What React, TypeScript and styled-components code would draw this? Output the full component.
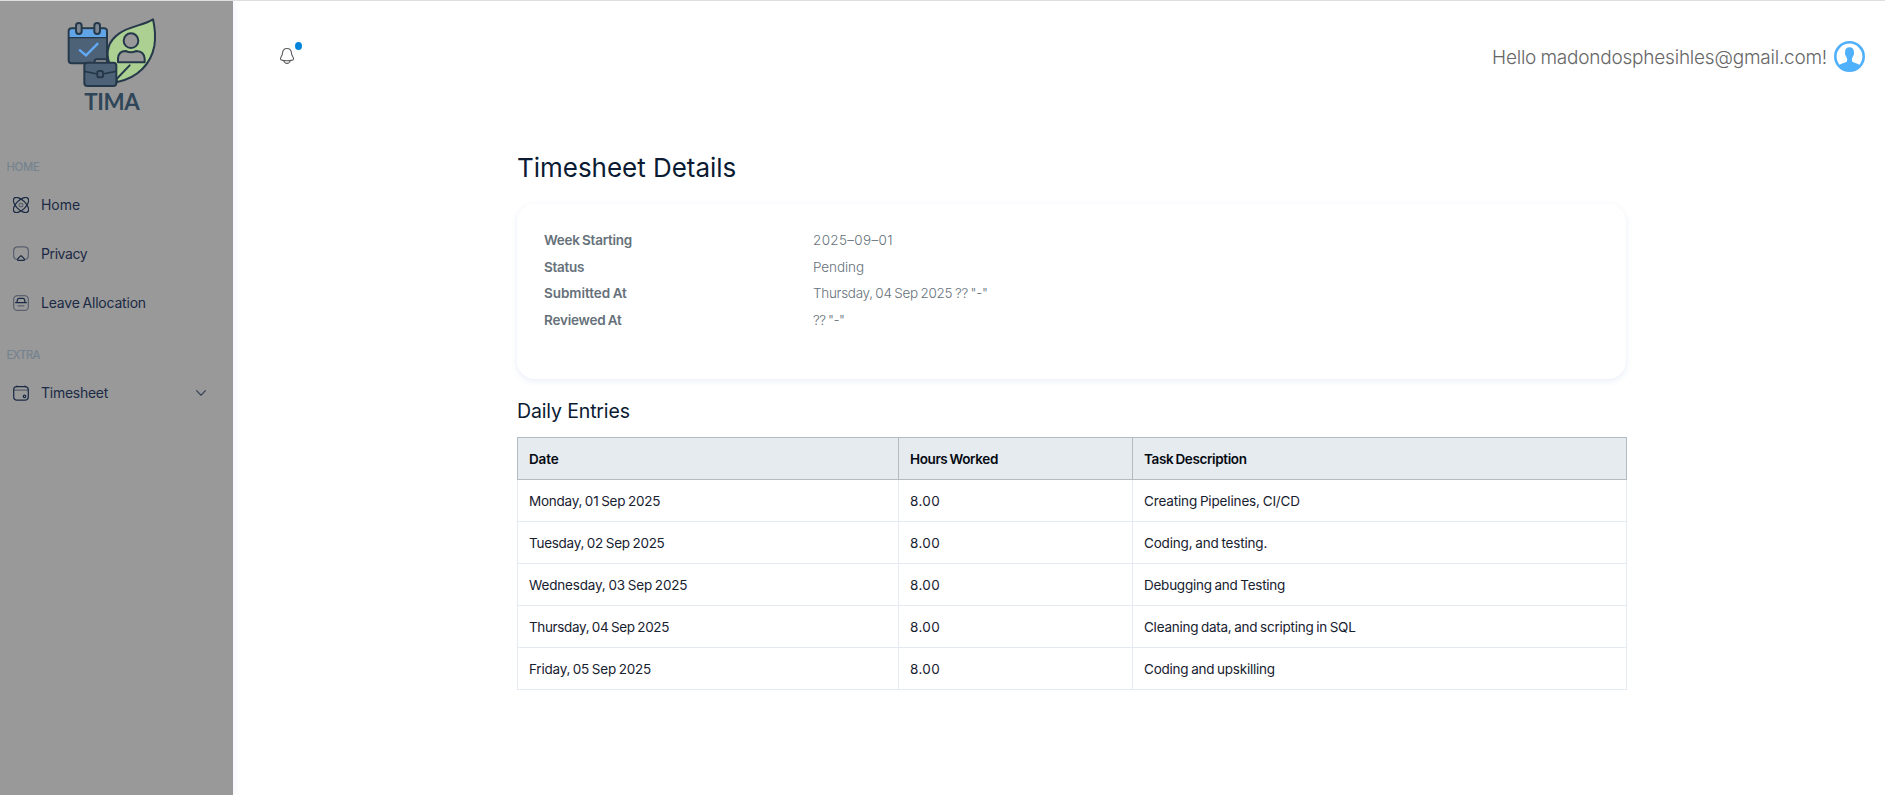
import React from "react";
import styled, { createGlobalStyle } from "styled-components";

const GlobalStyle = createGlobalStyle`
  *, *::before, *::after { box-sizing: border-box; }
  body {
    margin: 0;
    background: #fff;
    font-family: Inter, "Liberation Sans", sans-serif;
  }
  h1, h2, dl, dt, dd { margin: 0; }
`;

const Page = styled.div`
  display: flex;
  height: 795px;
  overflow: hidden;
  border-top: 1px solid #dcdfdf;
`;

const Sidebar = styled.aside`
  display: flex;
  flex-direction: column;
  width: 233px;
  flex: none;
  background: #999;
  box-shadow: 0 0 8px rgba(80, 80, 220, 0.1);
`;

const Logo = styled.svg`
  display: block;
  width: 130px;
  height: 124px;
  margin: 0 0 30px 50px;
`;

const SectionLabel = styled.div<{ $track: number }>`
  height: 24px;
  padding-left: 6.5px;
  font-size: 11.3px;
  font-weight: 500;
  line-height: 24px;
  letter-spacing: ${(p) => p.$track}px;
  color: #76838f;
`;

const NavList = styled.nav`
  display: flex;
  flex-direction: column;
  padding: 1px 27px 16px 13px;
`;

const NavItem = styled.a`
  display: flex;
  align-items: center;
  height: 49px;
  color: #1b2a45;
  font-size: 14px;
`;

const NavIcon = styled.svg`
  width: 16px;
  height: 16px;
  margin-right: 12px;
  flex: none;
  fill: none;
  stroke: currentColor;
  stroke-width: 1.25;
  stroke-linecap: round;
  stroke-linejoin: round;
`;

const Chevron = styled(NavIcon)`
  width: 10px;
  height: 6px;
  margin: 0 0 0 auto;
  opacity: 0.75;
`;

const Tracked = styled.span<{ $track: number }>`
  letter-spacing: ${(p) => p.$track}px;
  word-spacing: -0.8px;
  white-space: nowrap;
`;

const Main = styled.main`
  flex: 1;
  min-width: 0;
`;

const TopBar = styled.header`
  display: flex;
  align-items: center;
  justify-content: space-between;
  height: 111px;
  padding: 0 20px 0 46px;
`;

const BellButton = styled.div`
  position: relative;
  display: flex;
  width: 16px;
  height: 18px;
  margin-bottom: 2px;
`;

const BellIcon = styled.svg`
  width: 16px;
  height: 18px;
  fill: none;
  stroke: #5d5d5d;
  stroke-width: 1.1;
`;

const Dot = styled.span`
  position: absolute;
  left: 16px;
  top: -5px;
  width: 7px;
  height: 8px;
  border-radius: 50%;
  background: #0085db;
`;

const User = styled.div`
  display: flex;
  align-items: center;
  gap: 7px;
  font-size: 19px;
  font-weight: 300;
  color: #666;
`;

const Greeting = styled.div`
  padding-top: 2px;
`;

const Avatar = styled.svg`
  width: 31px;
  height: 31px;
`;

const Content = styled.div`
  width: 1109px;
  margin: 40px 0 0 284px;
`;

const Title = styled.h1`
  font-size: 26px;
  font-weight: 400;
  line-height: 32px;
  letter-spacing: -0.03px;
  color: #0a1b33;
`;

const Card = styled.section`
  height: 175px;
  margin-top: 20px;
  padding: 23px 27px;
  border-radius: 18px;
  box-shadow: 0 2px 6px rgba(37, 83, 185, 0.1);
`;

const Details = styled.dl`
  display: grid;
  grid-template-columns: 269px 1fr;
  grid-auto-rows: 26.6px;
  align-items: center;
  font-size: 13.5px;
  color: #66717a;
`;

const Term = styled.dt`
  font-weight: 600;
`;

const Value = styled.dd`
  font-weight: 300;
`;

const Subtitle = styled.h2`
  margin: 20px 0 14px;
  font-size: 19.5px;
  font-weight: 400;
  line-height: 24px;
  letter-spacing: -0.14px;
  color: #0a1b33;
`;

const Table = styled.table`
  width: 1109px;
  table-layout: fixed;
  border-collapse: collapse;
  font-size: 13.5px;
`;

const Col = styled.col<{ $width: number }>`
  width: ${(p) => p.$width}px;
`;

const HeadCell = styled.th`
  height: 42px;
  padding: 0 0 0 11px;
  border: 1px solid #b5bcc0;
  background: #e6ebef;
  color: #050a12;
  font-weight: 600;
  text-align: left;
`;

const Cell = styled.td`
  height: 42px;
  padding: 0 0 0 11px;
  border: 1px solid #e5eaf2;
  color: #17212f;
`;

type Fitted = [text: string, track: number];

const details: [Fitted, Fitted][] = [
  [["Week Starting", -0.25], ["2025–09–01", 0.34]],
  [["Status", -0.3], ["Pending", -0.07]],
  [["Submitted At", -0.05], ["Thursday, 04 Sep 2025 ?? \"-\"", -0.3]],
  [["Reviewed At", -0.22], ["?? \"-\"", -0.5]],
];

const columns: Fitted[] = [["Date", -0.15], ["Hours Worked", -0.39], ["Task Description", -0.38]];

const entries: Fitted[][] = [
  [["Monday, 01 Sep 2025", -0.24], ["8.00", 0.35], ["Creating Pipelines, CI/CD", -0.15]],
  [["Tuesday, 02 Sep 2025", -0.27], ["8.00", 0.35], ["Coding, and testing.", -0.17]],
  [["Wednesday, 03 Sep 2025", -0.17], ["8.00", 0.35], ["Debugging and Testing", -0.25]],
  [["Thursday, 04 Sep 2025", -0.36], ["8.00", 0.35], ["Cleaning data, and scripting in SQL", -0.25]],
  [["Friday, 05 Sep 2025", -0.23], ["8.00", 0.35], ["Coding and upskilling", -0.23]],
];

const Text = ({ value }: { value: Fitted }) => <Tracked $track={value[1]}>{value[0]}</Tracked>;

const TimaLogo = () => (
  <Logo viewBox="0 3 390 372" fill="none" stroke="#26394b" strokeWidth="6" strokeLinecap="round" strokeLinejoin="round">
    <path d="M309 58C315 84 317 112 313 138C303 191 264 233 202 246L178 190C165 151 179 121 207 101C240 77 278 78 309 58Z" fill="#acd092" />
    <path d="M194 243L239 196" />
    <circle cx="243" cy="122" r="22" fill="#999" />
    <path d="M204 187V176Q205 153 227 153Q243 161 259 153Q282 154 284 176V187Z" fill="#999" />
    <rect x="56" y="85" width="115" height="105" rx="9" fill="#4d6276" />
    <path d="M59 111V94Q59 88 66 88H162Q168 88 168 94V111Z" fill="#60a5e8" stroke="none" />
    <path d="M57 113H170" strokeWidth="4" />
    <rect x="78" y="69" width="17" height="33" rx="8" fill="#7c8793" />
    <rect x="133" y="69" width="17" height="33" rx="8" fill="#7c8793" />
    <path d="M90 151L108 166L142 132" stroke="#62aaf6" strokeWidth="7" strokeLinecap="square" strokeLinejoin="miter" />
    <path d="M134 188V183Q134 178 140 178H171V188" fill="#999" />
    <rect x="103" y="188" width="96" height="70" rx="9" fill="#4d6276" />
    <path d="M104 214L142 222M158 222L198 214" strokeWidth="5" />
    <rect x="142" y="213" width="17" height="19" rx="5" fill="#4d6276" />
    <text x="103" y="330" fill="#2f4558" stroke="none" fontFamily="Lato, sans-serif" fontSize="67" fontWeight="700" textLength="166">TIMA</text>
  </Logo>
);

const AtomIcon = () => (
  <NavIcon viewBox="0 0 16 16">
    <ellipse cx="8" cy="8" rx="9.6" ry="4.8" transform="rotate(45 8 8)" />
    <ellipse cx="8" cy="8" rx="9.6" ry="4.8" transform="rotate(-45 8 8)" />
    <rect x="6.3" y="6.3" width="3.4" height="3.4" rx="1" opacity="0.5" />
  </NavIcon>
);

const AirplayIcon = () => (
  <NavIcon viewBox="0 0 16 16">
    <path d="M3.7 13.4C1.2 13 .6 11.8.6 9V5C.6 1.9 1.9.8 5 .8H11C14.1.8 15.4 1.9 15.4 5V9C15.4 11.8 14.8 13 12.3 13.4" opacity="0.5" />
    <path d="M6.8 10.6Q8 9 9.2 10.6L11.2 12.8Q12 14.3 10.5 14.3H5.5Q4 14.3 4.8 12.8Z" />
  </NavIcon>
);

const LeaveIcon = () => (
  <NavIcon viewBox="0 0 16 16">
    <rect x="0.6" y="0.6" width="14.8" height="14.8" rx="4" opacity="0.5" />
    <path d="M2.6 7.5H13.4M4 7.2L4.5 4.5Q4.8 3.4 6 3.4H10Q11.2 3.4 11.5 4.5L12 7.2" />
    <path d="M5 10.8H11" opacity="0.5" />
  </NavIcon>
);

const CalendarIcon = () => (
  <NavIcon viewBox="0 0 16 16">
    <path d="M.7 4.8V11.5Q.7 15.2 4.2 15.2H11.8Q15.3 15.2 15.3 11.5V4.8Q15.3 1.5 11.8 1.5H4.2Q.7 1.5.7 4.8Z" />
    <path d="M1 5.2H15M4 .6V1.5M12 .6V1.5" opacity="0.5" />
    <circle cx="11.5" cy="11.4" r="1.2" />
  </NavIcon>
);

export default function App() {
  return (
    <>
      <GlobalStyle />
      <Page>
        <Sidebar>
          <TimaLogo />
          <SectionLabel $track={-0.3}>HOME</SectionLabel>
          <NavList>
            <NavItem><AtomIcon /><Tracked $track={-0.06}>Home</Tracked></NavItem>
            <NavItem><AirplayIcon /><Tracked $track={-0.4}>Privacy</Tracked></NavItem>
            <NavItem><LeaveIcon /><Tracked $track={-0.21}>Leave Allocation</Tracked></NavItem>
          </NavList>
          <SectionLabel $track={-0.75}>EXTRA</SectionLabel>
          <NavList>
            <NavItem>
              <CalendarIcon />
              <Tracked $track={-0.27}>Timesheet</Tracked>
              <Chevron viewBox="0 0 10 6"><path d="M.6.6L5 5.2L9.4.6" /></Chevron>
            </NavItem>
          </NavList>
        </Sidebar>
        <Main>
          <TopBar>
            <BellButton>
              <BellIcon viewBox="0 0 16 18">
                <path d="M8 1.5C5 1.5 3.5 3.8 3.4 6.7C3.3 9 1.3 10 1.4 12C1.5 13.1 2.3 13.3 3.5 13.4C6.5 13.8 9.5 13.8 12.5 13.4C13.7 13.3 14.5 13.1 14.6 12C14.7 10 12.7 9 12.6 6.7C12.5 3.8 11 1.5 8 1.5Z" />
                <path d="M4.9 14C5.6 17.2 10.4 17.2 11.1 14" />
              </BellIcon>
              <Dot />
            </BellButton>
            <User>
              <Greeting><Tracked $track={-0.22}>Hello madondosphesihles@gmail.com!</Tracked></Greeting>
              <Avatar viewBox="0 0 31 31">
                <circle cx="15.5" cy="15.5" r="14.2" fill="#fff" stroke="#4fb0fb" strokeWidth="2.6" />
                <path d="M15.5 6.2C12.3 6.2 10.8 8.4 11.1 11.8C10.7 13.3 11.4 14.2 11.9 14.8C12.2 16.2 12.8 17 13.1 17.5V20C12 22 7.5 22 4.5 24.7C9 31.3 22 31.3 26.5 24.7C23.5 22 19 22 17.9 20V17.5C18.2 17 18.8 16.2 19.1 14.8C19.6 14.2 20.3 13.3 19.9 11.8C20.2 8.4 18.7 6.2 15.5 6.2Z" fill="#4fb0fb" />
              </Avatar>
            </User>
          </TopBar>
          <Content>
            <Title>Timesheet Details</Title>
            <Card>
              <Details>
                {details.map(([term, value]) => (
                  <React.Fragment key={term[0]}>
                    <Term><Text value={term} /></Term>
                    <Value><Text value={value} /></Value>
                  </React.Fragment>
                ))}
              </Details>
            </Card>
            <Subtitle>Daily Entries</Subtitle>
            <Table>
              <colgroup>
                <Col $width={381} />
                <Col $width={234} />
                <Col $width={494} />
              </colgroup>
              <thead>
                <tr>{columns.map((c) => <HeadCell key={c[0]}><Text value={c} /></HeadCell>)}</tr>
              </thead>
              <tbody>
                {entries.map((row) => (
                  <tr key={row[0][0]}>{row.map((c, i) => <Cell key={i}><Text value={c} /></Cell>)}</tr>
                ))}
              </tbody>
            </Table>
          </Content>
        </Main>
      </Page>
    </>
  );
}
